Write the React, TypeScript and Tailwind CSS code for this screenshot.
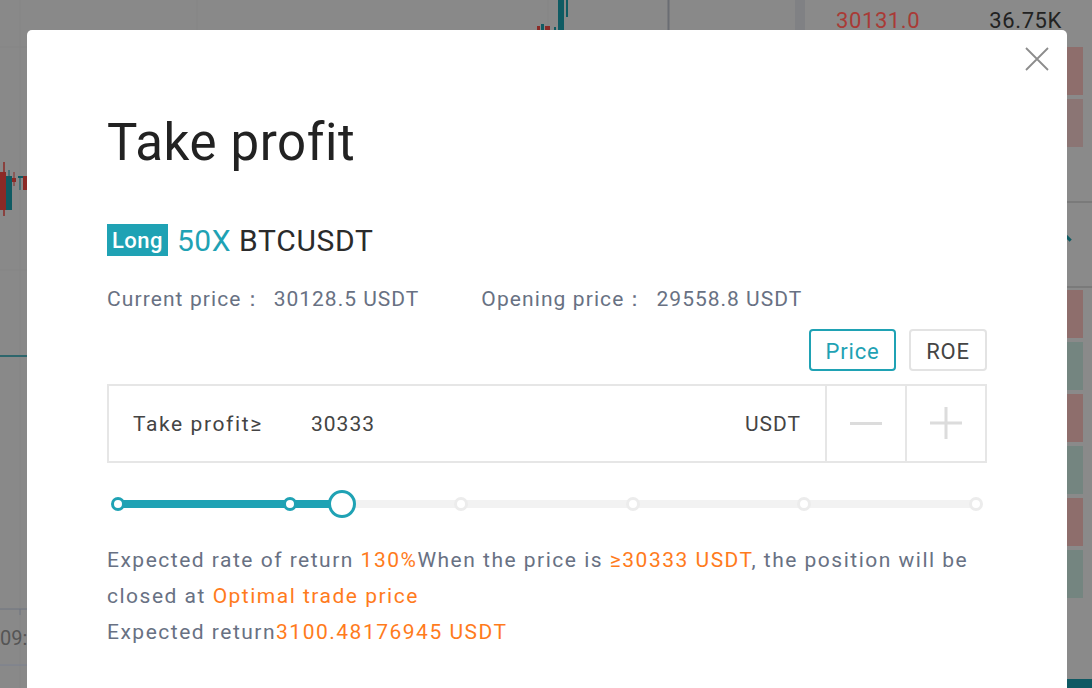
import React from "react";

const font = { fontFamily: "Roboto, 'Noto Sans', sans-serif" };

function ChartBackdrop() {
  return (
    <svg className="h-full w-full" viewBox="0 0 795 688" preserveAspectRatio="none">
      {/* grid */}
      <line x1="20" y1="0" x2="20" y2="688" stroke="#858585" strokeWidth="1" />
      <line x1="197" y1="0" x2="197" y2="688" stroke="#858585" strokeWidth="1" />
      <line x1="548" y1="0" x2="548" y2="40" stroke="#858585" strokeWidth="1" />
      <line x1="0" y1="47" x2="795" y2="47" stroke="#858585" strokeWidth="1" />
      <line x1="0" y1="270" x2="795" y2="270" stroke="#858585" strokeWidth="1" />
      <line x1="668.5" y1="0" x2="668.5" y2="688" stroke="#6a6d73" strokeWidth="2" />
      {/* candles left */}
      <line x1="4" y1="162" x2="4" y2="216" stroke="#8b2a26" strokeWidth="1.5" />
      <rect x="0" y="172" width="6" height="38" fill="#8b2a26" />
      <rect x="6" y="176" width="6" height="34" fill="#0f5b63" />
      <line x1="9" y1="170" x2="9" y2="176" stroke="#0f5b63" strokeWidth="1" />
      <rect x="12" y="178" width="4" height="4" fill="#8b2a26" />
      <line x1="14" y1="172" x2="14" y2="186" stroke="#8b2a26" strokeWidth="1" />
      <rect x="18" y="176" width="6" height="2" fill="#0f5b63" />
      <line x1="20" y1="176" x2="20" y2="190" stroke="#0f5b63" strokeWidth="1" />
      <rect x="23" y="176" width="4" height="14" fill="#8b2a26" />
      <line x1="0" y1="356" x2="27" y2="356" stroke="#0f5b63" strokeWidth="1.5" />
      {/* candles top */}
      <rect x="537" y="26" width="3" height="6" fill="#8b2a26" />
      <rect x="541" y="24" width="3" height="8" fill="#0f5b63" />
      <rect x="545" y="26" width="5" height="6" fill="#8b2a26" />
      <rect x="554" y="27" width="2" height="5" fill="#0f5b63" />
      <rect x="558" y="0" width="6" height="32" fill="#0f5b63" />
      <rect x="566" y="0" width="2" height="17" fill="#0f5b63" />
      {/* time axis */}
      <line x1="0" y1="609" x2="795" y2="609" stroke="#6f7580" strokeWidth="1" />
      <line x1="20" y1="609" x2="20" y2="615" stroke="#6f7580" strokeWidth="1" />
      <text x="0" y="645" fill="#555" fontSize="20" fontFamily="Roboto, sans-serif">09:</text>
      <line x1="0" y1="665" x2="795" y2="665" stroke="#7a8090" strokeWidth="1" />
    </svg>
  );
}

function OrderBook() {
  const bars = ["#8e6e6c", "#748580", "#8e6e6c", "#748580", "#8e6e6c", "#748580"];
  return (
    <div className="flex w-[287px] flex-col bg-[#8a8a8a]">
      <div className="flex h-[40px] items-center pl-[31px] pr-[30px] text-[22px] tracking-[0.6px]" style={font}>
        <span className="text-[#a93a36]">30131.0</span>
        <span className="ml-auto text-[#222]">36.75K</span>
      </div>
      <div className="flex flex-col items-end gap-[4px] pr-[9px] pt-[7px]">
        <div className="h-[48px] w-[16px] bg-[#8e6e6c]" />
        <div className="h-[48px] w-[16px] bg-[#8b7574]" />
      </div>
      <div className="mt-[54px] h-[2px] bg-[#7a7a7a]" />
      <div className="flex h-[83px] justify-end pr-[20px]">
        <div className="mt-[33px] h-[3px] w-[9px] rotate-45 bg-[#0f5b63]" />
      </div>
      <div className="h-[2px] bg-[#7a7a7a]" />
      <div className="flex flex-col items-end gap-[4px] pr-[9px] pt-[2px]">
        {bars.map((c, i) => (
          <div key={i} className="h-[48px] w-[16px]" style={{ backgroundColor: c }} />
        ))}
      </div>
      <div className="mt-auto h-[9px] bg-[#0f5963]" />
    </div>
  );
}

function Slider() {
  const marks = [0, 1, 2, 3, 4, 5];
  return (
    <div className="relative mx-[11px] mt-[27px] h-[28px]">
      <div className="absolute left-0 right-0 top-[10px] h-[8px] rounded-full bg-[#f2f2f2]" />
      <div className="absolute left-0 top-[10px] h-[8px] w-[224px] rounded-full bg-[#1fa2b4]" />
      {marks.map((m) => (
        <div
          key={m}
          className={
            "absolute top-[7px] h-[14px] w-[14px] -translate-x-1/2 rounded-full border-[3px] bg-white " +
            (m <= 1 ? "border-[#1fa2b4]" : "border-[#ececec]")
          }
          style={{ left: `${m * 20}%` }}
        />
      ))}
      <div className="absolute left-[224px] top-0 h-[28px] w-[28px] -translate-x-1/2 rounded-full border-[3px] border-[#1fa2b4] bg-white" />
    </div>
  );
}

export default function App() {
  return (
    <div className="relative h-[688px] w-[1092px] overflow-hidden bg-[#898989]" style={font}>
      <div className="flex h-full">
        <div className="w-[795px]">
          <ChartBackdrop />
        </div>
        <div className="w-[10px] bg-[#808184]" />
        <OrderBook />
      </div>

      <div className="absolute left-[27px] top-[30px] h-[720px] w-[1040px] rounded-[5px] bg-white px-[80px] pt-[80px]">
        <button className="absolute right-[18px] top-[17px] text-[#8c8c8c]">
          <svg width="24" height="24" viewBox="0 0 24 24" fill="none" stroke="currentColor" strokeWidth="1.8">
            <path d="M1 1 L23 23 M23 1 L1 23" />
          </svg>
        </button>

        <h1 className="text-[51px] font-normal leading-[66px] tracking-[0.6px] text-[#222]">Take profit</h1>

        <div className="mt-[48px] flex h-[32px] items-center">
          <span className="flex h-[32px] w-[61px] items-center justify-center bg-[#1fa2b4] text-[22px] font-medium tracking-[0.5px] text-white">
            Long
          </span>
          <span className="ml-[9px] text-[30px] tracking-[0.5px] text-[#1fa2b4]">50X</span>
          <span className="ml-[8px] text-[30px] tracking-[0.7px] text-[#2b2b2b]">BTCUSDT</span>
        </div>

        <div className="mt-[28px] flex text-[21px] text-[#687183]">
          <span className="tracking-[1.1px]">Current price：</span>
          <span className="ml-[10px] tracking-[1px]">30128.5 USDT</span>
          <span className="ml-[62px] tracking-[1.1px]">Opening price：</span>
          <span className="ml-[10px] tracking-[1px]">29558.8 USDT</span>
        </div>

        <div className="mt-[13px] flex justify-end gap-[13px]">
          <button className="h-[42px] w-[87px] rounded-[4px] border-2 border-[#1fa2b4] pt-[3px] text-[22px] tracking-[0.8px] text-[#1fa2b4]">
            Price
          </button>
          <button className="h-[42px] w-[78px] rounded-[4px] border-2 border-[#e3e3e3] pt-[3px] text-[22px] tracking-[0.8px] text-[#444]">
            ROE
          </button>
        </div>

        <div className="mt-[13px] flex h-[79px] border-2 border-[#e6e6e6]">
          <div className="flex flex-1 items-center pl-[24px] pr-[24px] pt-[4px] text-[21px] text-[#444]">
            <span className="w-[178px] tracking-[1.6px]">Take profit≥</span>
            <span className="tracking-[1px]">30333</span>
            <span className="ml-auto tracking-[1px]">USDT</span>
          </div>
          <div className="flex w-[80px] items-center justify-center border-l-2 border-[#e6e6e6]">
            <div className="h-[3px] w-[32px] bg-[#dcdcdc]" />
          </div>
          <div className="flex w-[80px] items-center justify-center border-l-2 border-[#e6e6e6]">
            <svg width="32" height="32" viewBox="0 0 32 32">
              <path d="M0 16 H32 M16 0 V32" stroke="#dcdcdc" strokeWidth="3" />
            </svg>
          </div>
        </div>

        <Slider />

        <div className="mt-[24px] text-[21px] leading-[36px] tracking-[1.5px] text-[#687183]">
          <p>
            Expected rate of return <span className="text-[#ff7b1c]">130%</span>When the price is{" "}
            <span className="text-[#ff7b1c]">≥30333 USDT</span>, the position will be closed at{" "}
            <span className="text-[#ff7b1c]">Optimal trade price</span>
          </p>
          <p>
            Expected return<span className="text-[#ff7b1c]">3100.48176945 USDT</span>
          </p>
        </div>
      </div>
    </div>
  );
}
